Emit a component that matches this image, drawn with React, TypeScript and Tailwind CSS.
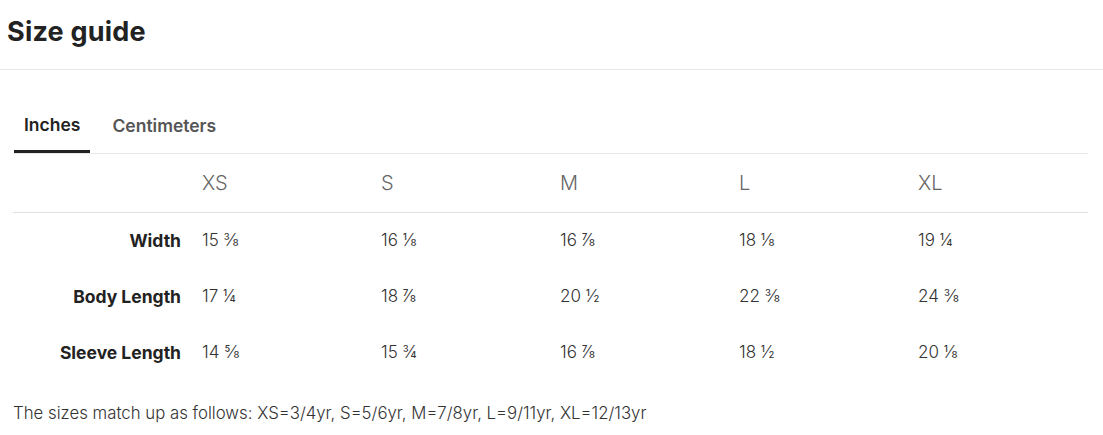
import React from "react";

const sizes = ["XS", "S", "M", "L", "XL"];
const rows: { label: string; values: string[] }[] = [
  { label: "Width", values: ["15 ⅜", "16 ⅛", "16 ⅞", "18 ⅛", "19 ¼"] },
  { label: "Body Length", values: ["17 ¼", "18 ⅞", "20 ½", "22 ⅜", "24 ⅜"] },
  { label: "Sleeve Length", values: ["14 ⅝", "15 ¾", "16 ⅞", "18 ½", "20 ⅛"] },
];

export default function App() {
  return (
    <div
      className="w-[1103px] h-[435px] bg-white text-[#222] overflow-hidden"
      style={{ fontFamily: "Inter, Lato, sans-serif" }}
    >
      <div className="h-[70px] flex items-center px-[7px] border-b border-[#e6e6e6]">
        <h1 className="text-[27px] font-bold leading-none mt-[-7px] tracking-[0.2px]">Size guide</h1>
      </div>
      <div className="px-[14px] pt-[28px]">
        <div className="flex border-b border-[#e6e6e6] w-[1074px]">
          <div className="px-[10px] h-[55px] flex items-center pt-[2px] border-b-[3px] border-[#222] mb-[-1px] text-[17.5px] font-semibold text-[#222]">
            Inches
          </div>
          <div className="px-[22px] h-[55px] flex items-center pt-[2px] text-[17.5px] font-semibold text-[#555]">
            Centimeters
          </div>
        </div>
        <div className="w-[1075px] ml-[-1px]">
          <div className="grid grid-cols-[180px_repeat(5,1fr)] h-[59px] items-center border-b border-[#e0e0e0]">
            <div />
            {sizes.map((s) => (
              <div key={s} className="pl-[9px] text-[20px] font-light text-[#666]">
                {s}
              </div>
            ))}
          </div>
          {rows.map((r) => (
            <div key={r.label} className="grid grid-cols-[180px_repeat(5,1fr)] h-[56px] items-center">
              <div className="text-right pr-[12px] text-[17.5px] font-bold text-[#222]">{r.label}</div>
              {r.values.map((v, i) => (
                <div key={i} className="pl-[9px] text-[17px] font-light text-[#333]">
                  {v}
                </div>
              ))}
            </div>
          ))}
        </div>
        <p className="mt-[20px] ml-[-1px] text-[16.8px] font-light text-[#333]">
          The sizes match up as follows: XS=3/4yr, S=5/6yr, M=7/8yr, L=9/11yr, XL=12/13yr
        </p>
      </div>
    </div>
  );
}
